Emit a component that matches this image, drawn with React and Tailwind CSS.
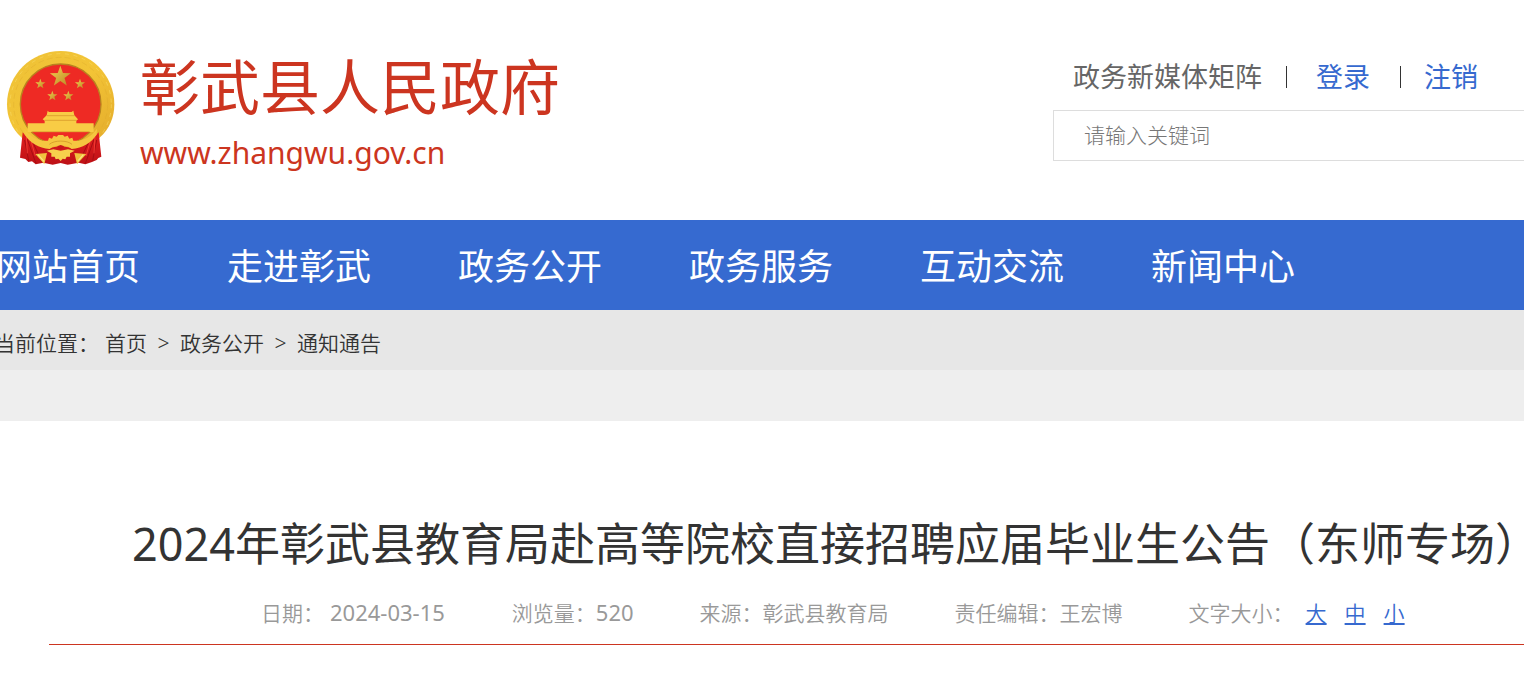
import React from 'react';

const navItems = ['网站首页', '走进彰武', '政务公开', '政务服务', '互动交流', '新闻中心'];

const crumbs = ['首页', '政务公开', '通知通告'];

const stars = [
  { x: 183, y: 110, r: 33 },
  { x: 123, y: 132, r: 16 },
  { x: 242, y: 132, r: 16 },
  { x: 159, y: 168, r: 16 },
  { x: 207, y: 168, r: 16 },
];

const starPoints = ({ x, y, r }) =>
  Array.from({ length: 10 }, (_, i) => {
    const radius = i % 2 ? r * 0.4 : r;
    const angle = (Math.PI / 5) * i - Math.PI / 2;
    return `${(x + radius * Math.cos(angle)).toFixed(1)},${(y + radius * Math.sin(angle)).toFixed(1)}`;
  }).join(' ');

function Emblem() {
  return (
    <svg viewBox="20 30 330 348" className="w-[110px] h-[116px] shrink-0" role="img" aria-label="国徽">
      <defs>
        <linearGradient id="gold" x1="0" y1="0" x2="1" y2="1">
          <stop offset="0" stopColor="#eec237" />
          <stop offset="0.5" stopColor="#f3c436" />
          <stop offset="1" stopColor="#e2a92a" />
        </linearGradient>
        <linearGradient id="star" x1="0" y1="0" x2="1" y2="1">
          <stop offset="0" stopColor="#f6d552" />
          <stop offset="1" stopColor="#b98523" />
        </linearGradient>
        <linearGradient id="drape" x1="0" y1="0" x2="0" y2="1">
          <stop offset="0" stopColor="#e3201f" />
          <stop offset="1" stopColor="#bd1016" />
        </linearGradient>
      </defs>

      {/* Wheat ring */}
      <path
        d="M184 33 C272 33 345 104 345 193 C345 232 331 266 302 292 L250 330 L118 330 L66 292 C37 266 23 232 23 193 C23 104 96 33 184 33Z"
        fill="url(#gold)"
      />
      <circle cx="184" cy="193" r="141" fill="none" stroke="#d9a52c" strokeWidth="3" strokeDasharray="18 9" opacity="0.35" />
      <circle cx="184" cy="193" r="152" fill="none" stroke="#f9df6d" strokeWidth="3" strokeDasharray="12 14" opacity="0.5" />
      <circle cx="184" cy="193" r="121" fill="#ee2a24" stroke="#b9821f" strokeWidth="4" />

      {stars.map((s) => (
        <polygon key={`${s.x}-${s.y}`} points={starPoints(s)} fill="url(#star)" />
      ))}

      {/* Gate */}
      <path d="M145 212 L149 216 H217 L222 212 L225 226 L236 238 L231 242 V250 H283 V276 H85 V250 H136 V242 L130 238 L142 226Z" fill="#f8cc45" />
      <path d="M143 227 H225 M136 241 H232" stroke="#d18f25" strokeWidth="2" />
      <path d="M97 275 H271" stroke="#e4aa32" strokeWidth="3" />

      {/* Drapes */}
      <path d="M70 277 C92 302 118 318 148 324 L184 318 L220 324 C250 318 276 302 298 277 L306 350 L297 354 L292 360 L278 366 L258 373 L238 368 L205 374 L184 369 L160 374 L132 368 L109 373 L98 364 L87 366 L78 357 L62 353Z" fill="url(#drape)" />
      <path d="M76 300 L88 362 M84 298 C92 320 100 344 110 370 M102 310 L128 366 M292 300 L280 362 M284 298 C276 320 268 344 258 370 M266 310 L240 366" stroke="#a70d13" strokeWidth="3" fill="none" />
      <path d="M81 291 L84 340 M96 306 L108 348 M287 291 L284 340 M272 306 L260 348" stroke="#f23a31" strokeWidth="3" fill="none" />

      {/* Gear and tassels */}
      <path
        d="M75 266 C94 292 116 304 146 302 L149 293 L158 296 L163 287 L172 290 L177 285 H191 L196 290 L205 287 L210 296 L219 293 L222 302 C252 304 274 292 293 266 L292 284 C276 308 250 324 217 327 L205 319 L184 316 L163 319 L151 327 C118 324 92 308 76 284Z"
        fill="#f5c640"
      />
      <path d="M150 313 C164 300 204 300 218 313" stroke="#d9a12c" strokeWidth="3" fill="none" />
      <path d="M174 319 L184 315 L194 319 L190 326 H178Z" fill="#c9151a" />
      <path d="M142 332 L162 328 L184 332 L206 328 L226 332 L212 340 L212 350 L202 350 L198 358 L190 356 L184 363 L177 356 L169 358 L166 350 L156 350 L156 340Z" fill="#f7d04c" />
      <path d="M108 342 L143 339 L135 373Z M261 342 L225 339 L233 373Z" fill="#f0c33e" />
      <path d="M116 344 L134 364 M252 344 L235 364" stroke="#fbe383" strokeWidth="4" />
    </svg>
  );
}

export default function App() {
  return (
    <div className="overflow-hidden bg-white text-[#333333] font-['Noto_Sans','Noto_Sans_CJK_SC',sans-serif]">
      {/* Header */}
      <header className="flex justify-between h-[220px] pl-[6px]">
        <a href="#home" className="flex items-start gap-6 pt-[50px] text-[#cc3520]">
          <Emblem />
          <div>
            <h1 className="text-[60px] leading-[74px] whitespace-nowrap">彰武县人民政府</h1>
            <p className="text-[30px] leading-[58px]">www.zhangwu.gov.cn</p>
          </div>
        </a>

        <div className="w-[471px] pt-[57px]">
          <div className="flex items-center pl-5 text-[27px] leading-10 whitespace-nowrap text-[#3669cf]">
            <a href="#media" className="text-[#666666]">政务新媒体矩阵</a>
            <span className="w-px h-[22px] ml-6 mr-[29px] bg-[#333333]" />
            <a href="#login">登录</a>
            <span className="w-px h-[22px] ml-[30px] mr-[23px] bg-[#333333]" />
            <a href="#logout">注销</a>
          </div>
          <input
            type="text"
            aria-label="请输入关键词"
            placeholder="请输入关键词"
            className="block w-full h-[51px] mt-[13px] pl-[30px] pb-[2px] border border-r-0 border-[#dddddd] text-[21px] font-light outline-none placeholder:text-[#777777]"
          />
        </div>
      </header>

      {/* Main nav */}
      <nav className="h-[90px] bg-[#366ad0]">
        <ul className="flex items-center gap-[87px] h-full -ml-1 pt-1 text-4xl text-white whitespace-nowrap">
          {navItems.map((item) => (
            <li key={item}>
              <a href="#nav">{item}</a>
            </li>
          ))}
        </ul>
      </nav>

      {/* Breadcrumb */}
      <div className="h-[111px] bg-[#eeeeee]">
        <div className="flex items-center h-[60px] -ml-[6px] pt-2 bg-[#e7e7e7] text-[21px] font-[350] whitespace-nowrap">
          <span className="mr-[6px]">当前位置：</span>
          {crumbs.map((crumb, i) => (
            <React.Fragment key={crumb}>
              {i > 0 && <span className="w-[33px] text-center">&gt;</span>}
              <a href="#crumb">{crumb}</a>
            </React.Fragment>
          ))}
        </div>
      </div>

      {/* Article */}
      <main className="pl-[49px] pt-[87px]">
        <h2 className="pl-[83px] text-[45px] leading-[72px] whitespace-nowrap">
          2024年彰武县教育局赴高等院校直接招聘应届毕业生公告（东师专场）
        </h2>
        <div className="flex items-baseline h-[65px] pt-4 pl-[212px] border-b border-[#cc3520] text-[21px] font-[350] text-[#999999] whitespace-nowrap">
          <span className="mr-[67px]">
            日期：<span className="ml-[6px] text-[22px] font-normal">2024-03-15</span>
          </span>
          <span className="mr-[66px]">
            浏览量：<span className="text-[22px] font-normal">520</span>
          </span>
          <span className="mr-[66px]">来源：彰武县教育局</span>
          <span className="mr-[66px]">责任编辑：王宏博</span>
          <span className="mr-3">文字大小：</span>
          <span className="flex gap-[18px] text-[#3669cf]">
            <button type="button" className="underline">大</button>
            <button type="button" className="underline">中</button>
            <button type="button" className="underline">小</button>
          </span>
        </div>
      </main>
    </div>
  );
}
